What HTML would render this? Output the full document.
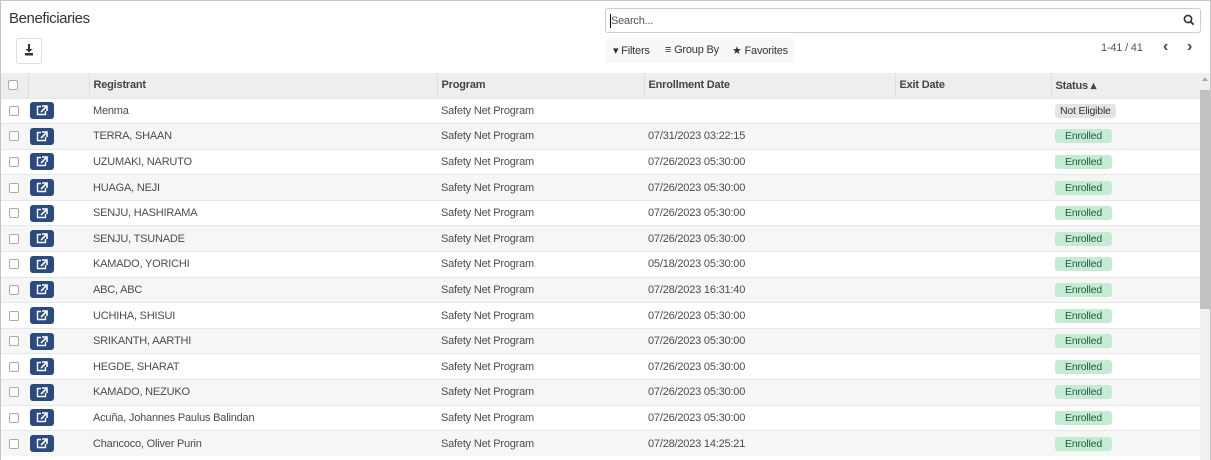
<!DOCTYPE html>
<html><head><meta charset="utf-8"><style>
*{box-sizing:border-box;margin:0;padding:0}
body{width:1211px;height:460px;overflow:hidden;background:#fff;font-family:"Liberation Sans",sans-serif;font-size:11px;letter-spacing:-0.2px;color:#4c4c4c;position:relative}
.frame{position:absolute;left:0;top:0;width:1211px;height:460px;border:1px solid #c4c4c4;border-bottom:none}
.title{position:absolute;left:9px;top:10px;font-size:15px;color:#333;letter-spacing:-0.4px}
.dl{position:absolute;left:16px;top:38px;width:26px;height:26px;border:1px solid #ddd;border-radius:3px;background:#fff}
.search{position:absolute;left:605px;top:8px;width:596px;height:25px;border:1px solid #ccc;border-radius:3px}
.search span{position:absolute;left:5px;top:6px;color:#555;font-size:11px}
.search span:before{content:"";position:absolute;left:-1px;top:-1px;width:1px;height:14px;background:#000}
.fbar{position:absolute;left:605px;top:38px;width:189px;height:25px;background:#f7f8fa;border-radius:3px;font-size:11px;color:#333;white-space:nowrap}
.fbar span{position:absolute;top:6px}
.pager{position:absolute;left:1101px;top:42px;font-size:11px;color:#555;white-space:nowrap}
.pager b{font-size:16px;position:absolute;top:-4px;color:#444}
table{position:absolute;left:1px;top:73px;border-collapse:collapse;table-layout:fixed;width:1199px}
th{height:25px;background:#eeeeee;text-align:left;font-weight:bold;color:#444;font-size:11px;padding-left:4px;border-left:1px solid #e0e0e0}
th:first-child{border-left:none}
td{height:25.6px;padding-left:4px;font-size:11px;color:#4c4c4c;border-top:1px solid #e6e6e6;white-space:nowrap}
tbody tr:nth-child(even) td{background:#f6f6f6}
tbody tr:nth-child(odd) td{background:#fff}
.cb{display:inline-block;width:10px;height:10px;border:1px solid #aaa;border-radius:2px;background:#fff;margin-left:4px;vertical-align:middle}
.btn{display:inline-block;width:24px;height:17px;background:#2b4a7e;border-radius:3px;position:relative;vertical-align:middle;margin-left:-2px}
.btn svg{position:absolute;left:6px;top:3px}
.bd{display:inline-block;padding:1px 5px;border-radius:3px;font-size:10.5px;min-width:57px;text-align:center}
.en{background:#c5ecd2;color:#1d5e3a}
.ne{background:#e4e4e4;color:#333}
.sb{position:absolute;left:1200px;top:73px;width:10px;height:387px;background:#f0f0f0}
.thumb{position:absolute;left:1200px;top:90px;width:10px;height:219px;background:#c1c1c1}
</style></head><body>
<div class="frame"></div>
<div class="title">Beneficiaries</div>
<div class="dl"><svg width="24" height="24" viewBox="0 0 24 24"><path d="M11 5h2v5h2.5L12 13.5 8.5 10H11z" fill="#333"/><rect x="8" y="14" width="8" height="2.5" fill="#333"/></svg></div>
<div class="search"><span>Search...</span><svg style="position:absolute;right:5px;top:5px" width="12" height="12" viewBox="0 0 12 12"><circle cx="5" cy="5" r="3.6" stroke="#333" stroke-width="1.6" fill="none"/><path d="M7.6 7.6l3 3" stroke="#333" stroke-width="1.8"/></svg></div>
<div class="fbar"><span style="left:8px">▾ Filters</span><span style="left:60px">≡ Group By</span><span style="left:127px">★ Favorites</span></div>
<div class="pager">1-41 / 41<b style="left:62px">‹</b><b style="left:86px">›</b></div>
<table>
<colgroup><col style="width:27px"><col style="width:61px"><col style="width:348px"><col style="width:207px"><col style="width:251px"><col style="width:156px"><col style="width:149px"></colgroup>
<thead><tr><th><span class="cb" style="margin-left:3px"></span></th><th></th><th>Registrant</th><th>Program</th><th>Enrollment Date</th><th>Exit Date</th><th>Status ▴</th></tr></thead>
<tbody>
<tr><td><span class="cb"></span></td><td><span class="btn"><svg width="12" height="11" viewBox="0 0 12 11"><path d="M5 1.5H1.5v8h8V6" stroke="#fff" stroke-width="1.4" fill="none"/><path d="M6 1h5v5M11 1L5 7" stroke="#fff" stroke-width="1.6" fill="none"/></svg></span></td><td>Menma</td><td>Safety Net Program</td><td></td><td></td><td><span class="bd ne">Not Eligible</span></td></tr>
<tr><td><span class="cb"></span></td><td><span class="btn"><svg width="12" height="11" viewBox="0 0 12 11"><path d="M5 1.5H1.5v8h8V6" stroke="#fff" stroke-width="1.4" fill="none"/><path d="M6 1h5v5M11 1L5 7" stroke="#fff" stroke-width="1.6" fill="none"/></svg></span></td><td>TERRA, SHAAN</td><td>Safety Net Program</td><td>07/31/2023 03:22:15</td><td></td><td><span class="bd en">Enrolled</span></td></tr>
<tr><td><span class="cb"></span></td><td><span class="btn"><svg width="12" height="11" viewBox="0 0 12 11"><path d="M5 1.5H1.5v8h8V6" stroke="#fff" stroke-width="1.4" fill="none"/><path d="M6 1h5v5M11 1L5 7" stroke="#fff" stroke-width="1.6" fill="none"/></svg></span></td><td>UZUMAKI, NARUTO</td><td>Safety Net Program</td><td>07/26/2023 05:30:00</td><td></td><td><span class="bd en">Enrolled</span></td></tr>
<tr><td><span class="cb"></span></td><td><span class="btn"><svg width="12" height="11" viewBox="0 0 12 11"><path d="M5 1.5H1.5v8h8V6" stroke="#fff" stroke-width="1.4" fill="none"/><path d="M6 1h5v5M11 1L5 7" stroke="#fff" stroke-width="1.6" fill="none"/></svg></span></td><td>HUAGA, NEJI</td><td>Safety Net Program</td><td>07/26/2023 05:30:00</td><td></td><td><span class="bd en">Enrolled</span></td></tr>
<tr><td><span class="cb"></span></td><td><span class="btn"><svg width="12" height="11" viewBox="0 0 12 11"><path d="M5 1.5H1.5v8h8V6" stroke="#fff" stroke-width="1.4" fill="none"/><path d="M6 1h5v5M11 1L5 7" stroke="#fff" stroke-width="1.6" fill="none"/></svg></span></td><td>SENJU, HASHIRAMA</td><td>Safety Net Program</td><td>07/26/2023 05:30:00</td><td></td><td><span class="bd en">Enrolled</span></td></tr>
<tr><td><span class="cb"></span></td><td><span class="btn"><svg width="12" height="11" viewBox="0 0 12 11"><path d="M5 1.5H1.5v8h8V6" stroke="#fff" stroke-width="1.4" fill="none"/><path d="M6 1h5v5M11 1L5 7" stroke="#fff" stroke-width="1.6" fill="none"/></svg></span></td><td>SENJU, TSUNADE</td><td>Safety Net Program</td><td>07/26/2023 05:30:00</td><td></td><td><span class="bd en">Enrolled</span></td></tr>
<tr><td><span class="cb"></span></td><td><span class="btn"><svg width="12" height="11" viewBox="0 0 12 11"><path d="M5 1.5H1.5v8h8V6" stroke="#fff" stroke-width="1.4" fill="none"/><path d="M6 1h5v5M11 1L5 7" stroke="#fff" stroke-width="1.6" fill="none"/></svg></span></td><td>KAMADO, YORICHI</td><td>Safety Net Program</td><td>05/18/2023 05:30:00</td><td></td><td><span class="bd en">Enrolled</span></td></tr>
<tr><td><span class="cb"></span></td><td><span class="btn"><svg width="12" height="11" viewBox="0 0 12 11"><path d="M5 1.5H1.5v8h8V6" stroke="#fff" stroke-width="1.4" fill="none"/><path d="M6 1h5v5M11 1L5 7" stroke="#fff" stroke-width="1.6" fill="none"/></svg></span></td><td>ABC, ABC</td><td>Safety Net Program</td><td>07/28/2023 16:31:40</td><td></td><td><span class="bd en">Enrolled</span></td></tr>
<tr><td><span class="cb"></span></td><td><span class="btn"><svg width="12" height="11" viewBox="0 0 12 11"><path d="M5 1.5H1.5v8h8V6" stroke="#fff" stroke-width="1.4" fill="none"/><path d="M6 1h5v5M11 1L5 7" stroke="#fff" stroke-width="1.6" fill="none"/></svg></span></td><td>UCHIHA, SHISUI</td><td>Safety Net Program</td><td>07/26/2023 05:30:00</td><td></td><td><span class="bd en">Enrolled</span></td></tr>
<tr><td><span class="cb"></span></td><td><span class="btn"><svg width="12" height="11" viewBox="0 0 12 11"><path d="M5 1.5H1.5v8h8V6" stroke="#fff" stroke-width="1.4" fill="none"/><path d="M6 1h5v5M11 1L5 7" stroke="#fff" stroke-width="1.6" fill="none"/></svg></span></td><td>SRIKANTH, AARTHI</td><td>Safety Net Program</td><td>07/26/2023 05:30:00</td><td></td><td><span class="bd en">Enrolled</span></td></tr>
<tr><td><span class="cb"></span></td><td><span class="btn"><svg width="12" height="11" viewBox="0 0 12 11"><path d="M5 1.5H1.5v8h8V6" stroke="#fff" stroke-width="1.4" fill="none"/><path d="M6 1h5v5M11 1L5 7" stroke="#fff" stroke-width="1.6" fill="none"/></svg></span></td><td>HEGDE, SHARAT</td><td>Safety Net Program</td><td>07/26/2023 05:30:00</td><td></td><td><span class="bd en">Enrolled</span></td></tr>
<tr><td><span class="cb"></span></td><td><span class="btn"><svg width="12" height="11" viewBox="0 0 12 11"><path d="M5 1.5H1.5v8h8V6" stroke="#fff" stroke-width="1.4" fill="none"/><path d="M6 1h5v5M11 1L5 7" stroke="#fff" stroke-width="1.6" fill="none"/></svg></span></td><td>KAMADO, NEZUKO</td><td>Safety Net Program</td><td>07/26/2023 05:30:00</td><td></td><td><span class="bd en">Enrolled</span></td></tr>
<tr><td><span class="cb"></span></td><td><span class="btn"><svg width="12" height="11" viewBox="0 0 12 11"><path d="M5 1.5H1.5v8h8V6" stroke="#fff" stroke-width="1.4" fill="none"/><path d="M6 1h5v5M11 1L5 7" stroke="#fff" stroke-width="1.6" fill="none"/></svg></span></td><td>Acuña, Johannes Paulus Balindan</td><td>Safety Net Program</td><td>07/26/2023 05:30:00</td><td></td><td><span class="bd en">Enrolled</span></td></tr>
<tr><td><span class="cb"></span></td><td><span class="btn"><svg width="12" height="11" viewBox="0 0 12 11"><path d="M5 1.5H1.5v8h8V6" stroke="#fff" stroke-width="1.4" fill="none"/><path d="M6 1h5v5M11 1L5 7" stroke="#fff" stroke-width="1.6" fill="none"/></svg></span></td><td>Chancoco, Oliver Purin</td><td>Safety Net Program</td><td>07/28/2023 14:25:21</td><td></td><td><span class="bd en">Enrolled</span></td></tr>
</tbody></table>
<div class="sb"></div><div class="thumb"></div>
<div style="position:absolute;left:1202px;top:77px;width:0;height:0;border-left:3px solid transparent;border-right:3px solid transparent;border-bottom:4px solid #aaa"></div>
</body></html>
